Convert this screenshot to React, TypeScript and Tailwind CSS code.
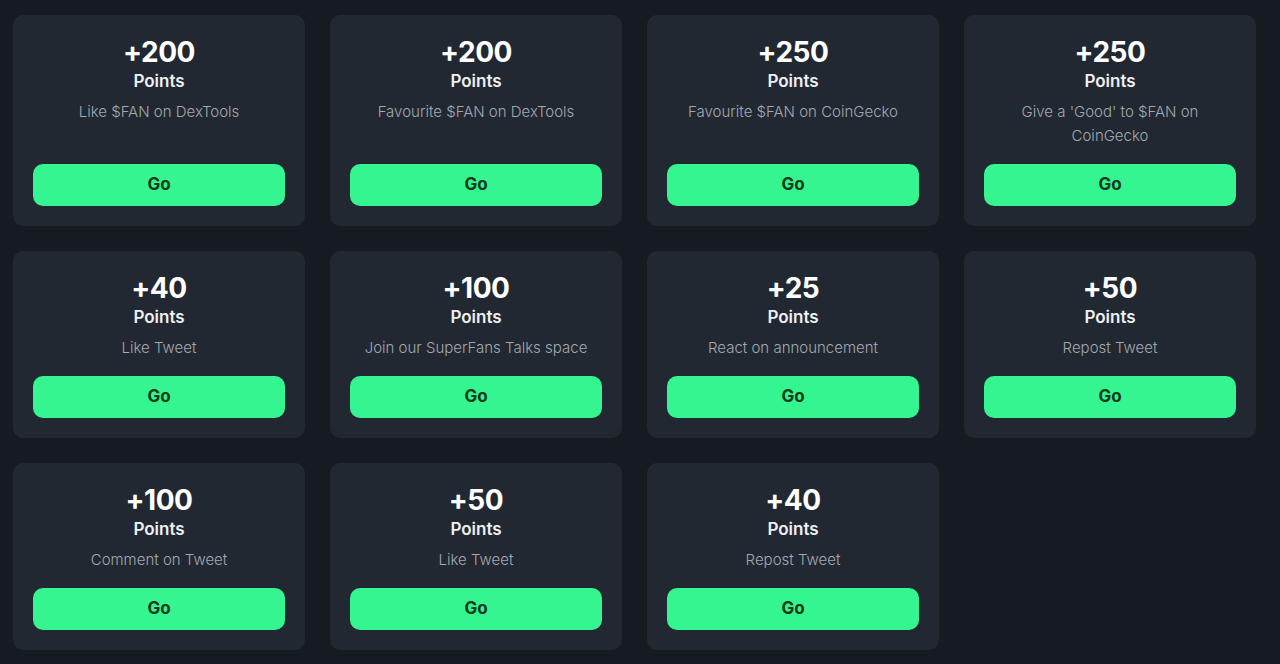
import React from "react";

const tasks: { pts: string; desc: string }[] = [
  { pts: "+200", desc: "Like $FAN on DexTools" },
  { pts: "+200", desc: "Favourite $FAN on DexTools" },
  { pts: "+250", desc: "Favourite $FAN on CoinGecko" },
  { pts: "+250", desc: "Give a 'Good' to $FAN on CoinGecko" },
  { pts: "+40", desc: "Like Tweet" },
  { pts: "+100", desc: "Join our SuperFans Talks space" },
  { pts: "+25", desc: "React on announcement" },
  { pts: "+50", desc: "Repost Tweet" },
  { pts: "+100", desc: "Comment on Tweet" },
  { pts: "+50", desc: "Like Tweet" },
  { pts: "+40", desc: "Repost Tweet" },
];

export default function App() {
  return (
    <div
      className="w-[1280px] h-[664px] bg-[#161a21] overflow-hidden"
      style={{ fontFamily: "Inter, 'Noto Sans', sans-serif" }}
    >
      <div className="grid grid-cols-[repeat(4,292px)] gap-[25px] pt-[15px] pl-[13px]">
        {tasks.map((t, i) => (
          <div
            key={i}
            className="flex flex-col items-center rounded-[10px] bg-[#222832] px-5 pt-5 pb-5"
          >
            <div className="text-[28px] leading-[34px] font-bold text-white tracking-[-0.5px]">
              {t.pts}
            </div>
            <div className="text-[17px] leading-[24px] font-semibold text-[#eef0f2]">
              Points
            </div>
            <div className="mt-[7px] mb-4 max-w-[232px] text-[15px] leading-[24px] font-light text-[#a3a8b0] text-center">
              {t.desc}
            </div>
            <button className="mt-auto w-full h-[42px] rounded-[10px] bg-[#35f590] text-[#0b3a1c] text-[17px] font-bold flex items-center justify-center">
              Go
            </button>
          </div>
        ))}
      </div>
    </div>
  );
}
